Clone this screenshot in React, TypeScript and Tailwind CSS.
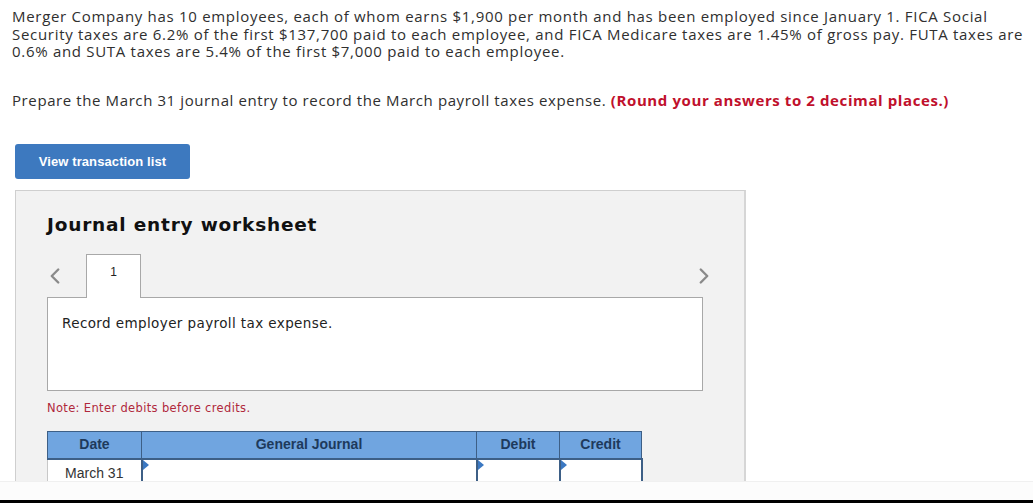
import { ChevronLeft, ChevronRight } from 'lucide-react'

const InputCell = ({ className }: { className: string }) => (
  <td className={`relative border-l-2 border-[#3d5f86] bg-white ${className}`}>
    <span className="absolute left-0 top-0 w-0 h-0 border-t-[5px] border-b-[5px] border-l-[6px] border-t-transparent border-b-transparent border-l-[#3b78c2]"></span>
  </td>
)

export default function App() {
  return (
    <div className="w-[1033px] h-[503px] bg-white overflow-hidden flex flex-col">
      <div className="h-[481px] overflow-hidden px-[12px] pt-[8px]">
        <p className="text-[15px] leading-[17.5px] text-[#2f2f2f] whitespace-nowrap font-['Open_Sans',sans-serif] tracking-[0.7px]">
          Merger Company has 10 employees, each of whom earns $1,900 per month and has been employed since January 1. FICA Social
          <br />
          Security taxes are 6.2% of the first $137,700 paid to each employee, and FICA Medicare taxes are 1.45% of gross pay. FUTA taxes are
          <br />
          0.6% and SUTA taxes are 5.4% of the first $7,000 paid to each employee.
        </p>
        <p className="mt-[31px] text-[15px] leading-[17.5px] text-[#2f2f2f] whitespace-nowrap font-['Open_Sans',sans-serif] tracking-[0.6px]">
          Prepare the March 31 journal entry to record the March payroll taxes expense.{' '}
          <span className="font-bold text-[#c0102c]">(Round your answers to 2 decimal places.)</span>
        </p>

        <button className="mt-[35px] ml-[3px] w-[175px] h-[35px] rounded-[3px] bg-[#3d79bf] text-white text-[13px] font-bold font-['Liberation_Sans',Arial,sans-serif] tracking-[0.1px]">
          View transaction list
        </button>

        {/* Worksheet */}
        <div className="mt-[11px] ml-[3px] w-[731px] h-[300px] bg-[#f2f2f2] border border-[#cfcfcf] border-r-2 border-r-[#d6d6d6] pl-[31px] pt-[21px]">
          <h2 className="text-[18.5px] leading-[26px] font-bold text-[#111] tracking-[0.8px] font-['DejaVu_Sans',Verdana,sans-serif]">
            Journal entry worksheet
          </h2>

          <div className="mt-[16px] w-[656px] flex items-end justify-between">
            <div className="flex items-end">
              <div className="w-[39px] h-[43px] flex items-center -ml-[5px]">
                <ChevronLeft size={26} strokeWidth={2.2} className="text-[#8a8a8a]" />
              </div>
              <div className="ml-[5px] w-[55px] h-[44px] -mb-px bg-white border border-b-0 border-[#a8a8a8] flex items-start justify-center pt-[8px] text-[12px] text-[#222] font-['Liberation_Sans',Arial,sans-serif] relative z-10">
                1
              </div>
            </div>
            <div className="h-[43px] flex items-center -mr-[14px]">
              <ChevronRight size={26} strokeWidth={2.2} className="text-[#8a8a8a]" />
            </div>
          </div>

          <div className="w-[656px] h-[94px] bg-white border border-[#a8a8a8] pl-[14px] pt-[17px] text-[13.5px] leading-[16px] tracking-[0.4px] text-[#222] font-['DejaVu_Sans',Verdana,sans-serif]">
            Record employer payroll tax expense.
          </div>

          <p className="mt-[10px] text-[11.5px] leading-[14px] tracking-[0.35px] text-[#b0283c] font-['DejaVu_Sans',Verdana,sans-serif]">
            Note: Enter debits before credits.
          </p>

          <table className="mt-[16px] border-collapse font-['Liberation_Sans',Arial,sans-serif] text-[14px]">
            <thead>
              <tr className="bg-[#70a5e0] text-[#1e3a5c] h-[27px]">
                <th className="w-[94px] border border-[#3d5f86] border-b-2 font-bold">Date</th>
                <th className="w-[335px] border border-[#3d5f86] border-b-2 font-bold">General Journal</th>
                <th className="w-[83px] border border-[#3d5f86] border-b-2 font-bold">Debit</th>
                <th className="w-[82px] border border-[#3d5f86] border-b-2 font-bold">Credit</th>
              </tr>
            </thead>
            <tbody>
              <tr className="h-[30px]">
                <td className="bg-white border-l border-[#c8c8c8] text-center text-[#333] align-top pt-[3px]">March 31</td>
                <InputCell className="" />
                <InputCell className="" />
                <InputCell className="border-r-2" />
              </tr>
            </tbody>
          </table>
        </div>
      </div>
      <div className="h-[19px] bg-[#fcfcfc] border-t border-[#f0f0f0]"></div>
      <div className="h-[3px] bg-black"></div>
    </div>
  )
}
